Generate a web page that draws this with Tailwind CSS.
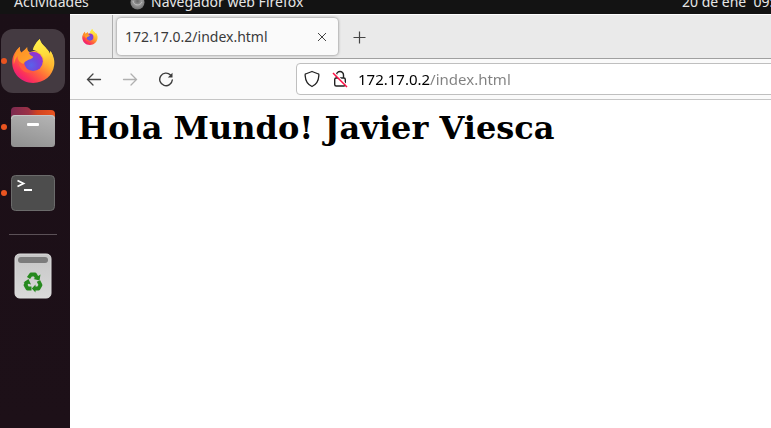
<!DOCTYPE html>
<html lang="es">
<head>
<meta charset="utf-8">
<meta name="viewport" content="width=device-width, initial-scale=1">
<title>172.17.0.2/index.html</title>
<script src="https://cdn.jsdelivr.net/npm/@tailwindcss/browser@4"></script>
</head>
<body class="flex h-screen flex-col overflow-hidden bg-[#1a0e16] font-['Noto_Sans',sans-serif] text-sm">
<svg class="absolute size-0" aria-hidden="true">
  <defs>
    <linearGradient id="body" x1="0.85" y1="0.1" x2="0.2" y2="0.95">
      <stop offset="0" stop-color="#fff04a"/><stop offset="0.35" stop-color="#ffb52e"/><stop offset="0.62" stop-color="#ff6a3a"/><stop offset="0.85" stop-color="#fb2f5c"/><stop offset="1" stop-color="#e51c7d"/>
    </linearGradient>
    <linearGradient id="tail" x1="0.4" y1="0" x2="0.6" y2="1">
      <stop offset="0" stop-color="#fff24b"/><stop offset="0.55" stop-color="#ffd93a"/><stop offset="1" stop-color="#ff9a35" stop-opacity="0"/>
    </linearGradient>
    <radialGradient id="globe" cx="0.4" cy="0.7" r="0.7">
      <stop offset="0" stop-color="#5a62ea"/><stop offset="0.5" stop-color="#7048dc"/><stop offset="1" stop-color="#9a30d0"/>
    </radialGradient>
    <linearGradient id="head" x1="0" y1="0" x2="1" y2="1">
      <stop offset="0" stop-color="#ff8a22"/><stop offset="1" stop-color="#ffa72e"/>
    </linearGradient>
    <linearGradient id="folderback" x1="0" x2="1"><stop offset="0" stop-color="#7c2a50"/><stop offset="0.4" stop-color="#9c3146"/><stop offset="0.6" stop-color="#d2431f"/><stop offset="1" stop-color="#e95420"/></linearGradient>
    <linearGradient id="folderfront" x1="0.7" y1="0" x2="0.3" y2="1"><stop offset="0" stop-color="#b2b2b2"/><stop offset="1" stop-color="#929292"/></linearGradient>
    <linearGradient id="bin" x2="0" y2="1"><stop offset="0" stop-color="#c6c6c6"/><stop offset="1" stop-color="#d9d9d9"/></linearGradient>
    <radialGradient id="ball" cx="0.5" cy="0.4" r="0.6"><stop offset="0" stop-color="#666"/><stop offset="0.5" stop-color="#999"/><stop offset="1" stop-color="#6f6f6f"/></radialGradient>
    <symbol id="firefox" viewBox="0 0 128 132">
      <path fill="url(#body)" d="M23 23C22 31 24 36 27 41C36 36 39 31 45 25C44 33 48 38 53 40C60 36 69 34 78 38C66 28 66 13 83 0C85 15 99 22 107 34C110 37 112 41 113 45L115 36C125 51 128 67 126 79C122 110 96 132 63 132C26 132 0 103 0 70C0 52 8 37 23 23Z"/>
      <path fill="url(#tail)" d="M83 0C78 7 66 15 62 32C68 34 76 37 82 42C98 51 100 74 92 91C105 86 113 76 113 61C118 70 118 83 114 92C128 76 126 53 115 36L113 45C112 41 110 37 107 34C99 22 85 15 83 0Z"/>
      <circle fill="url(#globe)" cx="63" cy="67" r="29"/>
      <path fill="#ff5a3e" d="M18 52L37 64C33 80 45 97 63 98C42 108 22 92 18 68Z"/>
      <path fill="url(#head)" d="M23 23C22 31 24 36 27 41C36 36 39 31 45 25C44 34 47 40 52 44C53 47 56 49 63 53C62 60 50 60 48 63C42 67 37 68 34 74C24 72 15 63 17 50C11 56 8 64 5 76C3 54 10 36 23 23Z"/>
    </symbol>
  </defs>
</svg>

<header class="flex h-[14px] shrink-0 items-end overflow-hidden bg-[#131313] pb-[2px] pl-3.5 leading-5 text-[#e6e6e6]">
  <div class="flex flex-1 gap-[36px]">
    <button class="w-20 text-left whitespace-nowrap">Actividades</button>
    <button class="flex items-center gap-[6px] whitespace-nowrap">
      <svg class="size-[15px]" viewBox="0 0 15 15" aria-hidden="true"><circle cx="7.500" cy="7.500" r="7" fill="url(#ball)"/><path d="M3 6c1 5 7 5 9 1" fill="none" stroke="#bbb"/></svg>
      Navegador web Firefox
    </button>
  </div>
  <time class="w-[89px] whitespace-pre">20 de ene  09:</time>
</header>

<div class="flex min-h-0 flex-1">
  <nav aria-label="Dock" class="flex w-[70px] shrink-0 flex-col gap-[2px] bg-linear-to-b from-[#1b0f17] to-[#1d1018] pt-[15px] pl-px">
    <button aria-label="Firefox" class="relative flex size-16 items-center justify-center rounded-xl bg-[#443a41]">
      <span class="absolute left-0 size-[6px] rounded-full bg-[#e95420]"></span>
      <svg class="h-11 w-[43px]"><use href="#firefox"/></svg>
    </button>
    <button aria-label="Archivos" class="relative flex size-16 items-center justify-center">
      <span class="absolute left-0 size-[6px] rounded-full bg-[#e95420]"></span>
      <svg class="h-[42px] w-[46px]" viewBox="0 0 46 42">
        <path fill="url(#folderback)" d="M1 5Q1 1 5 1H16Q18 1 19 2L21 4H41Q45 4 45 8V28H1Z"/>
        <rect x="1" y="9" width="44" height="32" rx="3.500" fill="url(#folderfront)"/>
        <path d="M1.500 13Q1.500 9.500 5 9.500H41Q44.500 9.500 44.500 13" fill="none" stroke="#c5c5c5"/>
        <rect x="17" y="17" width="12" height="3" rx="1" fill="#fff"/>
      </svg>
    </button>
    <button aria-label="Terminal" class="relative flex size-16 items-center justify-center">
      <span class="absolute left-0 size-[6px] rounded-full bg-[#e95420]"></span>
      <svg class="h-9 w-[44px]" viewBox="0 0 44 36">
        <rect x=".5" y=".5" width="43" height="35" rx="4" fill="#4d4d4d" stroke="#6b6b6b"/>
        <path d="M6.500 5.500L12.500 8.500L6.500 11.500M13 15H21" fill="none" stroke="#fff" stroke-width="1.800"/>
      </svg>
    </button>
    <hr class="mx-2 mt-[7px] mb-[7px] w-12 border-[#5b5157]">
    <button aria-label="Papelera" class="flex size-16 items-center justify-center">
      <svg class="h-[46px] w-[38px]" viewBox="0 0 38 46">
        <rect x="1" y="1" width="36" height="44" rx="4.500" fill="url(#bin)" stroke="#ddd"/>
        <rect x="4" y="4" width="30" height="6" rx="3" fill="#7c7c7c"/>
        <g fill="none" stroke="#26891e" stroke-width="3.800" stroke-linejoin="round">
          <path d="M14.500 25L17 21.500H21L23 25"/>
          <path d="M24.500 28L26.500 32L24.500 35.500H21"/>
          <path d="M17.500 35.500H13.500L11.500 32L13 29"/>
        </g>
        <path fill="#26891e" d="M26.500 21.500L25.500 27.500L19.500 26Z M21.500 31.500V39.500L17.800 35.500Z M9.500 29.500L14.500 26L17 31.500Z"/>
      </svg>
    </button>
  </nav>

  <main class="flex min-w-0 flex-1 flex-col border-t border-white bg-white">
    <div class="flex h-11 shrink-0 items-stretch border-b border-[#a0a0a0] bg-[#eaeaea]">
      <button aria-label="Firefox View" class="flex w-[43px] items-center justify-center border-r border-[#adadad] pr-[3px]">
        <svg class="size-4"><use href="#firefox"/></svg>
      </button>
      <div class="my-[3px] ml-1 flex w-[221px] items-center justify-between rounded bg-[#fafafa] pr-2 pl-2 shadow-[0_0_3px_rgba(0,0,0,0.5)]">
        <span class="pt-px text-[#3a3a3a]">172.17.0.2/index.html</span>
        <button aria-label="Cerrar pestaña"><svg class="size-4" viewBox="0 0 16 16" fill="none" stroke="#444"><path d="M4 4L12 12M12 4L4 12"/></svg></button>
      </div>
      <button aria-label="Nueva pestaña" class="ml-[13px]"><svg class="size-4" viewBox="0 0 16 16" fill="none" stroke="#444" stroke-width="1.200"><path d="M8.500 2.500V14.500M2.500 8.500H14.500"/></svg></button>
    </div>
    <div class="flex h-[41px] shrink-0 items-center border-b border-[#c5c5c5] bg-[#fafafa]">
      <div class="ml-4 flex w-[210px] gap-5">
        <button aria-label="Atrás"><svg class="size-4" viewBox="0 0 16 16" fill="none" stroke="#444" stroke-width="1.300" stroke-linecap="round"><path d="M14.500 8.500H1.500M7 3L1.500 8.500L7 14"/></svg></button>
        <button aria-label="Adelante" disabled><svg class="size-4" viewBox="0 0 16 16" fill="none" stroke="#b0b0b0" stroke-width="1.300" stroke-linecap="round"><path d="M1.500 8.500H14.500M9 3L14.500 8.500L9 14"/></svg></button>
        <button aria-label="Recargar"><svg class="size-4" viewBox="0 0 16 16" fill="none" stroke="#3b3b3b" stroke-width="1.400" stroke-linecap="round"><path d="M14.300 9A6.300 6.300 0 1 1 12.500 4"/><path d="M14.500 1.800V6.500H9.800Z" fill="#3b3b3b" stroke="none"/></svg></button>
      </div>
      <div class="-mr-2 flex h-8 flex-1 items-center rounded border border-[#bfbfbf] bg-white pl-[6px]">
        <button aria-label="Protección"><svg class="size-[18px]" viewBox="0 0 18 18" fill="none" stroke="#222" stroke-width="1.300" stroke-linejoin="round"><path d="M9 1.500L15.500 4Q16 4 15.800 6C15.500 11 13.500 14.500 9 16.500C4.500 14.500 2.500 11 2.200 6Q2 4 2.500 4Z"/></svg></button>
        <button aria-label="Conexión no segura" class="ml-[10px]"><svg class="size-[18px]" viewBox="0 0 18 18" fill="none" stroke="#222" stroke-width="1.400"><rect x="3.700" y="8" width="10.600" height="8" rx="1.500"/><path d="M5.500 8V5a3.500 3.500 0 0 1 7 0V8"/><path d="M2.500 2L16.500 16" stroke="#fff"/><path d="M2 3L16 17" stroke="#ff0f45" stroke-width="1.500"/></svg></button>
        <input type="text" aria-label="Dirección" value="172.17.0.2/index.html" class="ml-[9px] min-w-0 flex-1 bg-[linear-gradient(to_right,#000_72px,#808080_72px)] bg-clip-text pt-px text-[15px] text-transparent outline-none">
      </div>
    </div>
    <article class="flex-1 px-2 pt-[9px]">
      <h1 class="font-['DejaVu_Serif',serif] text-[32px] leading-[38px] font-bold text-black">Hola Mundo! Javier Viesca</h1>
    </article>
  </main>
</div>
</body>
</html>
